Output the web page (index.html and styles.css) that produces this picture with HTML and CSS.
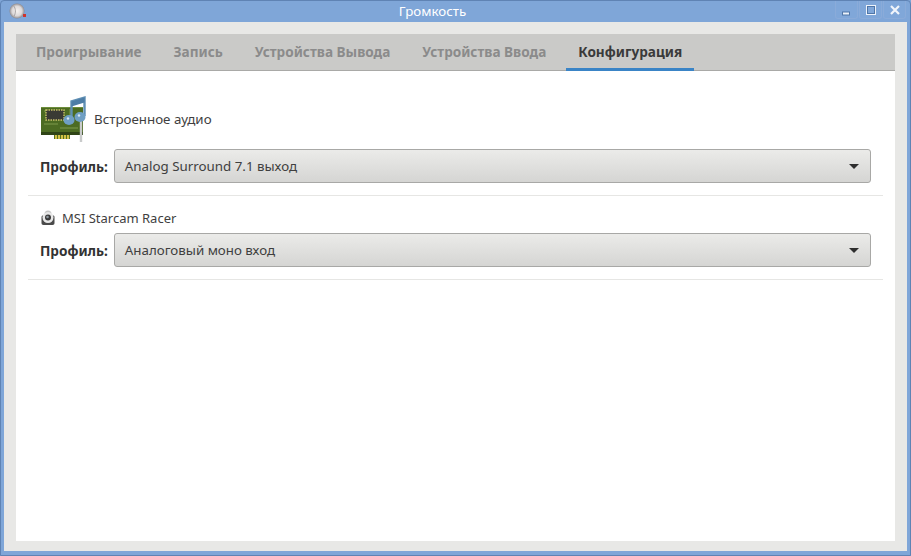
FILE: index.html
```html
<!DOCTYPE html>
<html lang="ru">
<head>
<meta charset="utf-8">
<title>Громкость</title>
<link rel="stylesheet" href="styles.css">
</head>
<body>
<div class="window">
  <header class="titlebar">
    <svg class="app-icon" width="20" height="20" viewBox="0 0 20 20">
      <defs><radialGradient id="ball" cx="0.5" cy="0.5" r="0.6"><stop offset="0" stop-color="#f6f2f0"/><stop offset="0.55" stop-color="#dcd8d8"/><stop offset="1" stop-color="#5f5c62"/></radialGradient></defs>
      <circle cx="10" cy="9" r="7.5" fill="url(#ball)"/>
      <path d="M6.5 3.5c2.5 3.5 2.5 7 .5 11" stroke="#a9a5a5" stroke-width="1" fill="none"/>
      <rect x="16" y="12" width="3" height="3" fill="#d0342c"/>
    </svg>
    <span class="title">Громкость</span>
    <div class="controls">
      <button class="ctl"><svg width="12" height="12" viewBox="0 0 12 12"><rect x="1.5" y="8" width="7" height="3" fill="#eef3fa" stroke="#4f76a8" stroke-width="1"/></svg></button>
      <button class="ctl"><svg width="12" height="12" viewBox="0 0 12 12"><rect x="1.5" y="1.5" width="9" height="9" fill="none" stroke="#eef3fa" stroke-width="1"/><rect x="2.5" y="2.5" width="7" height="7" fill="none" stroke="#4f76a8" stroke-width="1"/></svg></button>
      <button class="ctl"><svg width="12" height="12" viewBox="0 0 12 12"><path d="M2 2l8 8M10 2l-8 8" stroke="#f1f5fb" stroke-width="2.2" fill="none"/></svg></button>
    </div>
  </header>
  <main class="client">
    <nav class="tabs">
      <span class="tab">Проигрывание</span>
      <span class="tab">Запись</span>
      <span class="tab">Устройства Вывода</span>
      <span class="tab">Устройства Ввода</span>
      <span class="tab active">Конфигурация</span>
    </nav>
    <section class="page">
      <div class="card first">
        <div class="device">
          <svg class="card-icon" width="48" height="48" viewBox="0 0 48 48">
            <rect x="1" y="12" width="42" height="28" fill="#4c6b22"/>
            <rect x="1" y="37" width="42" height="3" fill="#2f4416"/>
            <path d="M1 12.5h42" stroke="#6d8d3a"/>
            <path d="M4 16h20M4 29h14M20 33h18M30 14v8" stroke="#7f9c4c" stroke-width="1"/>
            <rect x="6" y="15" width="18" height="10" fill="#3a3a34" stroke="#c9c26a" stroke-dasharray="1.5 1" stroke-width="1.4"/>
            <rect x="14" y="40" width="16" height="4" fill="#55721f"/>
            <path d="M16 40v4M19 40v4M22 40v4M25 40v4M28 40v4" stroke="#e2c94b" stroke-width="1.8"/>
            <path d="M41 18v29" stroke="#c9cbcb" stroke-width="2.4"/>
            <path d="M31.5 24V6.5l13-4V21" fill="none" stroke="#5f8fb4" stroke-width="2.4"/>
            <path d="M31.5 6.5l13-4v5l-13 4z" fill="#4d7da6"/>
            <ellipse cx="29" cy="25" rx="5.5" ry="5" fill="#6f9fc4"/>
            <ellipse cx="40" cy="22" rx="5.5" ry="5" fill="#6f9fc4"/>
            <circle cx="28" cy="23.5" r="1.2" fill="#d8e7f2"/>
            <circle cx="39" cy="20.5" r="1.2" fill="#d8e7f2"/>
          </svg>
          <span class="device-name">Встроенное аудио</span>
        </div>
        <div class="profile">
          <span class="profile-label">Профиль:</span>
          <div class="select"><span>Analog Surround 7.1 выход</span><i class="arrow"></i></div>
        </div>
      </div>
      <div class="card">
        <div class="device small">
          <svg class="card-icon" width="16" height="16" viewBox="0 0 16 16">
            <circle cx="8" cy="4" r="3.5" fill="#c4c4c4"/>
            <path d="M3 5.5h10c1 0 1.5 .6 1.5 1.5v6c0 1-.6 2-2 2h-9c-1.4 0-2-1-2-2V7c0-.9.5-1.5 1.500-1.500z" fill="#4a4a4a"/>
            <circle cx="8" cy="7.500" r="5.5" fill="#e8e8e8"/>
            <circle cx="8" cy="7.500" r="3" fill="#3a3a3a"/>
            <circle cx="7.500" cy="7" r="1.300" fill="#8d979e"/>
          </svg>
          <span class="device-name latin">MSI Starcam Racer</span>
        </div>
        <div class="profile">
          <span class="profile-label">Профиль:</span>
          <div class="select"><span>Аналоговый моно вход</span><i class="arrow"></i></div>
        </div>
      </div>
    </section>
  </main>
</div>
</body>
</html>
```
FILE: styles.css
```css
* { box-sizing: border-box; }
html, body { margin: 0; height: 100%; }
body { background: #7fa6d8; font-family: "Noto Sans", "Open Sans", sans-serif; font-size: 13.33px; color: #3a3a3a; overflow: hidden; }
.window { width: 911px; height: 556px; display: flex; flex-direction: column; background: #7fa6d8; border: 1px solid #5f83b4; border-radius: 4px 4px 0 0; padding: 0 3px 4px; }
.titlebar { height: 21px; flex: none; display: flex; align-items: center; position: relative; justify-content: center; }
.app-icon { position: absolute; left: 3px; top: 1px; }
.title { color: #fff; font-size: 13.33px; line-height: 21px; margin-right: 46px; }
.controls { position: absolute; right: 0; top: 0; display: flex; gap: 1px; padding-right: 1px; }
.ctl { width: 23px; height: 18px; padding: 0; border: 1px solid #8aabd9; border-top: 0; border-radius: 0 0 3px 3px; background: #80a7d9; display: flex; align-items: center; justify-content: center; }
.client { flex: 1; background: #e8e8e6; padding: 12px 12px 10px; display: flex; flex-direction: column; }
.tabs { height: 37px; flex: none; display: flex; background: #cacac8; border-bottom: 1px solid #a9a9a7; }
.tab { padding: 0 12px; margin-right: 8px; font-size: 13.6px; font-weight: 700; color: #8b8b8b; line-height: 36px; height: 37px; flex: none; }
.tab:first-child { margin-left: 8px; }
.tab.active { color: #3a3a3a; border-bottom: 3px solid #3a84c6; }
.page { flex: 1; background: #fff; padding: 24px 12px 0; }
.card { border-bottom: 1px solid #e6e6e4; padding: 0 12px 12px; }
.card + .card { padding-top: 14px; }
.device { display: flex; align-items: center; gap: 6px; height: 48px; margin-bottom: 6px; }
.device.small { height: 16px; gap: 6px; margin-bottom: 7px; }
.card-icon { flex: none; }
.device-name { color: #3f3f3f; }
.device-name.latin { font-size: 13px; }
.profile { display: flex; align-items: center; gap: 6px; }
.profile-label { font-weight: 700; color: #333; font-size: 13.6px; }
.select { flex: 1; height: 34px; display: flex; align-items: center; justify-content: space-between; padding: 0 10px; border: 1px solid #a8a8a6; border-radius: 3px; background: linear-gradient(#ebebe9, #d5d5d3); color: #3f3f3f; }
.arrow { width: 0; height: 0; border-left: 5.5px solid transparent; border-right: 5.5px solid transparent; border-top: 5px solid #2e2e2e; margin-right: 1px; }
```
